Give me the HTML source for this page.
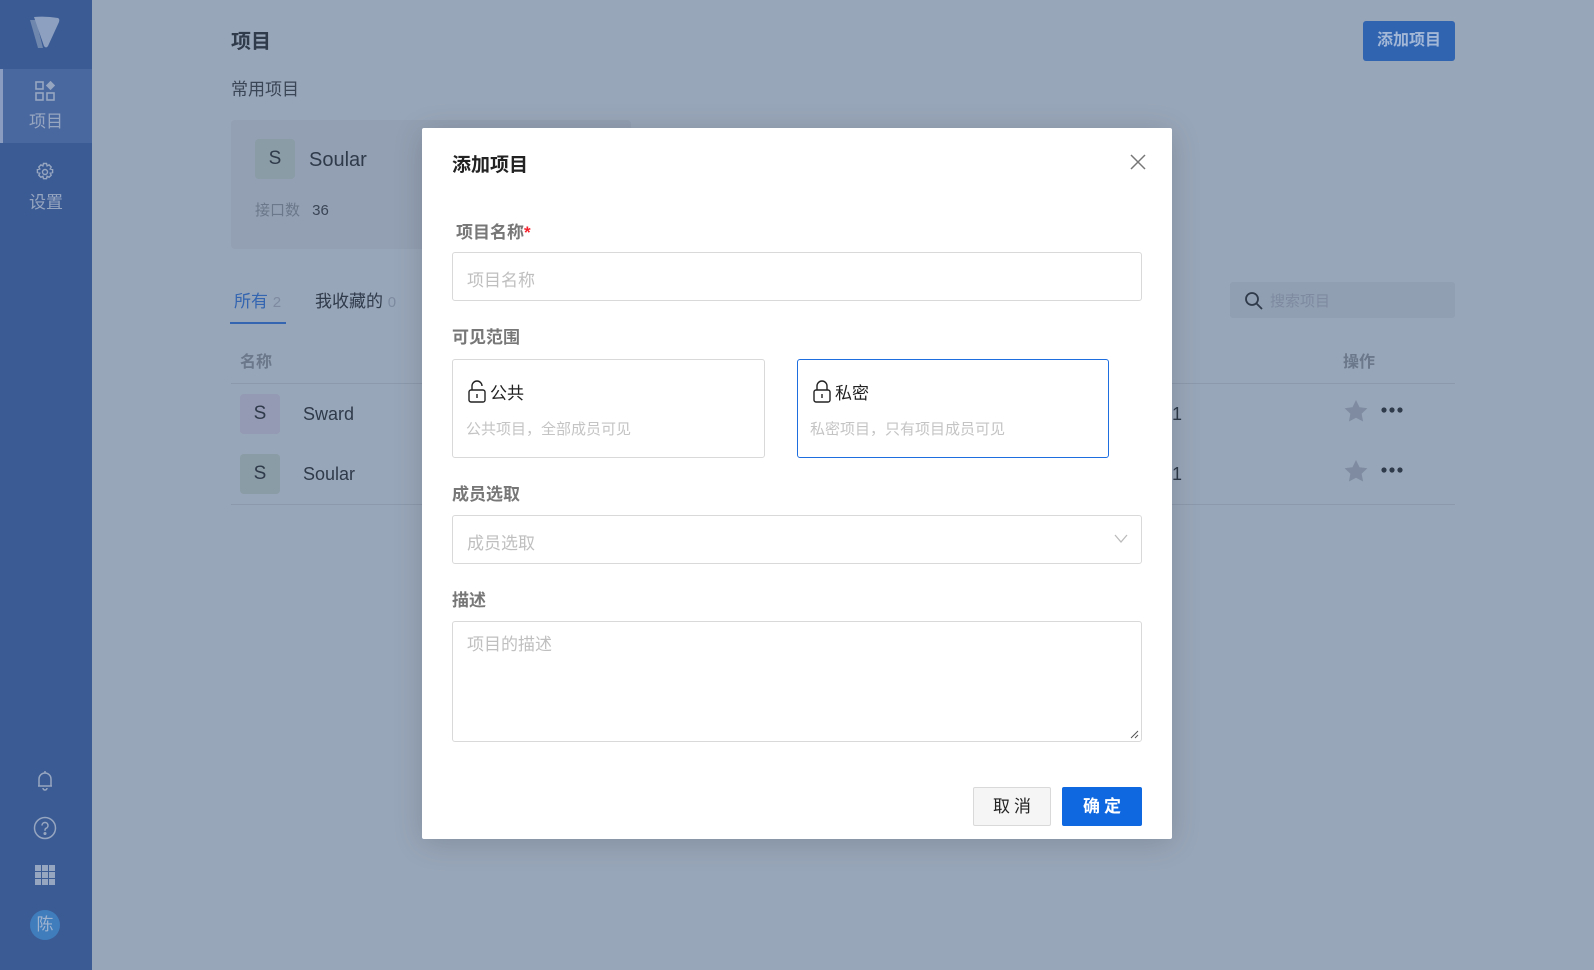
<!DOCTYPE html>
<html><head><meta charset="utf-8"><style>
*{box-sizing:border-box;margin:0;padding:0}
body{width:1594px;height:970px;overflow:hidden;background:#98a6b9;font-family:"Liberation Sans","Noto Sans CJK SC",sans-serif;position:relative}
.a{position:absolute}
.sb{left:0;top:0;width:92px;height:970px;background:#3b5b94}
.nav{left:0;width:92px;text-align:center;color:#97a6c0;font-size:17px}
.t{white-space:nowrap}
.modal{left:422px;top:128px;width:750px;height:711px;background:#fff;border-radius:2px;box-shadow:0 4px 30px rgba(0,0,0,.15)}
.lbl{font-size:16px;font-weight:bold;color:#777}
.inp{border:1px solid #d9d9d9;border-radius:3px;background:#fff}
.ph{color:#bfbfbf;font-size:17px}
</style></head><body>
<div class="a sb"></div>
<svg class="a" style="left:26px;top:14px" width="36" height="36" viewBox="0 0 36 36"><path d="M4 6 L12 34 L17 34 L10 6Z" fill="#6f86ad"/><path d="M8 3 Q20 2 32 4 Q34 5 33 8 L22 32 Q20 35 18 32 Z" fill="#8ea0bf"/></svg>
<div class="a" style="left:0;top:69px;width:92px;height:74px;background:#4a68a0;border-left:3px solid #8a9cc0"></div>
<svg class="a" style="left:35px;top:81px" width="20" height="20" viewBox="0 0 20 20" fill="none" stroke="#97a6c0" stroke-width="1.6"><rect x="1" y="1" width="7" height="7"/><rect x="1" y="12" width="7" height="7"/><rect x="12" y="12" width="7" height="7"/><path d="M15.5 1 L19 4.5 L15.5 8 L12 4.5Z" fill="#97a6c0"/></svg>
<div class="a nav t" style="top:107px">项目</div>
<svg class="a" style="left:35px;top:162px" width="20" height="20" viewBox="0 0 20 20" fill="none" stroke="#97a6c0" stroke-width="1.4"><circle cx="10" cy="10" r="2.5"/><path d="M8.5 1.5h3l.6 2.4 2-1 2.1 2.1-1 2 2.4.6v3l-2.4.6 1 2-2.1 2.1-2-1-.6 2.4h-3l-.6-2.4-2 1-2.1-2.1 1-2-2.4-.6v-3l2.4-.6-1-2 2.1-2.1 2 1z"/></svg>
<div class="a nav t" style="top:188px">设置</div>
<svg class="a" style="left:34px;top:770px" width="22" height="22" viewBox="0 0 22 22" fill="none" stroke="#97a6c0" stroke-width="1.5"><path d="M5 16V9a6 6 0 0 1 12 0v7H4h14"/><path d="M11 1v2M9 18a2 2 0 0 0 4 0"/></svg>
<svg class="a" style="left:33px;top:816px" width="24" height="24" viewBox="0 0 24 24" fill="none" stroke="#97a6c0" stroke-width="1.5"><circle cx="12" cy="12" r="10.5"/><path d="M9 9.5a3 3 0 1 1 4 2.8c-.8.4-1 1-1 2v.5"/><circle cx="12" cy="17.5" r=".8" fill="#97a6c0"/></svg>
<svg class="a" style="left:35px;top:865px" width="20" height="20" viewBox="0 0 20 20" fill="#97a6c0"><rect x="0" y="0" width="6" height="6"/><rect x="7" y="0" width="6" height="6"/><rect x="14" y="0" width="6" height="6"/><rect x="0" y="7" width="6" height="6"/><rect x="7" y="7" width="6" height="6"/><rect x="14" y="7" width="6" height="6"/><rect x="0" y="14" width="6" height="6"/><rect x="7" y="14" width="6" height="6"/><rect x="14" y="14" width="6" height="6"/></svg>
<div class="a" style="left:30px;top:910px;width:30px;height:30px;border-radius:50%;background:#3f7dbd;color:#9fb3cf;font-size:17px;text-align:center;line-height:30px">陈</div>

<div class="a t" style="left:231px;top:25px;font-size:20px;font-weight:bold;color:#2f3a4a">项目</div>
<div class="a t" style="left:231px;top:75px;font-size:17px;color:#3a4556">常用项目</div>
<div class="a" style="left:1363px;top:21px;width:92px;height:40px;background:#3064b0;border-radius:3px;color:#a3b7d6;font-size:16px;font-weight:bold;text-align:center;line-height:40px">添加项目</div>
<div class="a" style="left:231px;top:120px;width:400px;height:129px;background:#93a0b3;border-radius:4px"></div>
<div class="a" style="left:255px;top:139px;width:40px;height:40px;background:#8a9ca5;border-radius:4px;color:#2f3a4a;font-size:19px;text-align:center;line-height:40px">S</div>
<div class="a t" style="left:309px;top:149px;font-size:20px;color:#2f3a4a">Soular</div>
<div class="a t" style="left:255px;top:199px;font-size:15px;color:#6b778a">接口数 <span style="color:#3a4556;margin-left:8px">36</span></div>
<div class="a t" style="left:234px;top:287px;font-size:17px;color:#3365b0">所有 <span style="color:#7d8aa0;font-size:15px">2</span></div>
<div class="a" style="left:230px;top:322px;width:56px;height:2px;background:#3365b0"></div>
<div class="a t" style="left:315px;top:287px;font-size:17px;color:#2f3a4a">我收藏的 <span style="color:#7d8aa0;font-size:15px">0</span></div>
<div class="a" style="left:1230px;top:282px;width:225px;height:36px;background:#919fb2;border-radius:3px"></div>
<svg class="a" style="left:1244px;top:291px" width="20" height="20" viewBox="0 0 20 20" fill="none" stroke="#2f3a4a" stroke-width="1.8"><circle cx="8" cy="8" r="6"/><path d="M12.5 12.5L18 18"/></svg>
<div class="a t" style="left:1270px;top:290px;font-size:15px;color:#7d8aa0">搜索项目</div>
<div class="a t" style="left:240px;top:348px;font-size:16px;font-weight:bold;color:#6b778a">名称</div>
<div class="a t" style="left:1343px;top:348px;font-size:16px;font-weight:bold;color:#6b778a">操作</div>
<div class="a" style="left:231px;top:383px;width:1224px;height:1px;background:#8c99ac"></div>
<div class="a" style="left:231px;top:504px;width:1224px;height:1px;background:#8c99ac"></div>
<div class="a" style="left:240px;top:394px;width:40px;height:40px;background:#9499b4;border-radius:4px;color:#2f3a4a;font-size:19px;text-align:center;line-height:40px">S</div>
<div class="a t" style="left:303px;top:404px;font-size:18px;color:#2f3a4a">Sward</div>
<div class="a" style="left:240px;top:454px;width:40px;height:40px;background:#8a9ca5;border-radius:4px;color:#2f3a4a;font-size:19px;text-align:center;line-height:40px">S</div>
<div class="a t" style="left:303px;top:464px;font-size:18px;color:#2f3a4a">Soular</div>
<div class="a t" style="left:1172px;top:404px;font-size:18px;color:#2f3a4a">1</div>
<div class="a t" style="left:1172px;top:464px;font-size:18px;color:#2f3a4a">1</div>
<svg class="a" style="left:1344px;top:400px" width="24" height="22" viewBox="0 0 24 22"><path d="M12 0l3.5 7.2 7.9 1-5.8 5.5 1.5 7.8L12 17.7 4.9 21.5l1.5-7.8L.6 8.2l7.9-1z" fill="#7e8ba0"/></svg>
<svg class="a" style="left:1344px;top:460px" width="24" height="22" viewBox="0 0 24 22"><path d="M12 0l3.5 7.2 7.9 1-5.8 5.5 1.5 7.8L12 17.7 4.9 21.5l1.5-7.8L.6 8.2l7.9-1z" fill="#7e8ba0"/></svg>
<svg class="a" style="left:1381px;top:407px" width="22" height="6" viewBox="0 0 22 6" fill="#2f3a4a"><circle cx="3" cy="3" r="2.6"/><circle cx="11" cy="3" r="2.6"/><circle cx="19" cy="3" r="2.6"/></svg>
<svg class="a" style="left:1381px;top:467px" width="22" height="6" viewBox="0 0 22 6" fill="#2f3a4a"><circle cx="3" cy="3" r="2.6"/><circle cx="11" cy="3" r="2.6"/><circle cx="19" cy="3" r="2.6"/></svg>

<div class="a modal"></div>
<div class="a t" style="left:452px;top:150px;font-size:19px;font-weight:bold;color:#222">添加项目</div>
<svg class="a" style="left:1130px;top:154px" width="16" height="16" viewBox="0 0 16 16" stroke="#777" stroke-width="1.5"><path d="M1 1L15 15M15 1L1 15"/></svg>
<div class="a t lbl" style="left:456px;top:218px;font-size:17px">项目名称<span style="color:#f5222d">*</span></div>
<div class="a inp" style="left:452px;top:252px;width:690px;height:49px"></div>
<div class="a t ph" style="left:467px;top:266px">项目名称</div>
<div class="a t lbl" style="left:452px;top:323px;font-size:17px">可见范围</div>
<div class="a inp" style="left:452px;top:359px;width:313px;height:99px"></div>
<div class="a inp" style="left:797px;top:359px;width:312px;height:99px;border-color:#1f6ee0"></div>
<svg class="a" style="left:468px;top:380px" width="18" height="23" viewBox="0 0 18 23" fill="none" stroke="#222" stroke-width="1.4"><path d="M4 10V6a5 5 0 0 1 10 0"/><rect x="1" y="10" width="16" height="12" rx="2"/><path d="M9 14v4"/></svg>
<div class="a t" style="left:490px;top:379px;font-size:17px;color:#222">公共</div>
<div class="a t" style="left:466px;top:418px;font-size:15px;color:#c4c4c4">公共项目，全部成员可见</div>
<svg class="a" style="left:813px;top:380px" width="18" height="23" viewBox="0 0 18 23" fill="none" stroke="#222" stroke-width="1.4"><path d="M4 10V6a5 5 0 0 1 10 0v4"/><rect x="1" y="10" width="16" height="12" rx="2"/><path d="M9 14v4"/></svg>
<div class="a t" style="left:835px;top:379px;font-size:17px;color:#222">私密</div>
<div class="a t" style="left:810px;top:418px;font-size:15px;color:#c4c4c4">私密项目，只有项目成员可见</div>
<div class="a t lbl" style="left:452px;top:480px;font-size:17px">成员选取</div>
<div class="a inp" style="left:452px;top:515px;width:690px;height:49px"></div>
<div class="a t ph" style="left:467px;top:529px">成员选取</div>
<svg class="a" style="left:1114px;top:534px" width="14" height="10" viewBox="0 0 14 10" fill="none" stroke="#bbb" stroke-width="1.3"><path d="M1 1l6 7 6-7"/></svg>
<div class="a t lbl" style="left:452px;top:586px;font-size:17px">描述</div>
<div class="a inp" style="left:452px;top:621px;width:690px;height:121px"></div>
<div class="a t ph" style="left:467px;top:630px">项目的描述</div>
<svg class="a" style="left:1130px;top:730px" width="9" height="9" viewBox="0 0 9 9" stroke="#555" stroke-width="1"><path d="M1 8L8 1M5 8L8 5"/></svg>
<div class="a" style="left:973px;top:787px;width:78px;height:39px;border:1px solid #d9d9d9;background:#f5f5f5;border-radius:2px;color:#222;font-size:17px;text-align:center;line-height:37px;letter-spacing:4px;padding-left:4px">取消</div>
<div class="a" style="left:1062px;top:787px;width:80px;height:39px;background:#0f68e0;border-radius:2px;color:#fff;font-size:17px;font-weight:bold;text-align:center;line-height:39px;letter-spacing:4px;padding-left:4px">确定</div>
</body></html>
